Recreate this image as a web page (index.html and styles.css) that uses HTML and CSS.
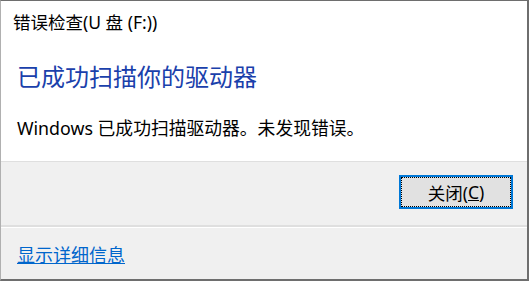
FILE: index.html
```html
<!DOCTYPE html>
<html lang="zh-CN">
<head>
    <meta charset="UTF-8">
    <meta name="viewport" content="width=device-width, initial-scale=1.0">
    <title>错误检查</title>
    <link rel="stylesheet" href="styles.css">
</head>
<body>
    <div class="dialog">
        <div class="main">
            <div class="caption">错误检查(U 盘 (F:))</div>
            <h1 class="instruction">已成功扫描你的驱动器</h1>
            <p class="message">Windows 已成功扫描驱动器。未发现错误。</p>
        </div>
        <div class="buttons">
            <button class="btn"><span class="focus">关闭(<u>C</u>)</span></button>
        </div>
        <div class="details">
            <a href="#" class="link">显示详细信息</a>
        </div>
    </div>
</body>
</html>
```

FILE: styles.css
```css
body {
    margin: 0;
    font-family: "Noto Sans", "Noto Sans CJK SC", sans-serif;
    background-color: #ffffff;
}
.dialog {
    width: 529px;
    height: 281px;
    box-sizing: border-box;
    border: 1px solid #6e6e6e;
    border-left-color: #b0b0b0;
    border-right-width: 2px;
    border-bottom-width: 2px;
    display: flex;
    flex-direction: column;
}
.main {
    height: 160px;
    background-color: #ffffff;
    padding: 0 16px;
}
.caption {
    font-size: 17.5px;
    color: #000000;
    line-height: 22px;
    margin: 10px 0 0 -4px;
}
.instruction {
    margin: 29px 0 0 0;
    font-size: 24px;
    font-weight: normal;
    line-height: 30px;
    color: #1a40ab;
}
.message {
    margin: 24px 0 0 0;
    font-size: 17.8px;
    line-height: 24px;
    color: #000000;
}
.buttons {
    height: 64px;
    border-top: 1px solid #dfdfdf;
    background-color: #f0f0f0;
    display: flex;
    justify-content: flex-end;
    align-items: flex-start;
    padding: 13px 14px 0 0;
    box-sizing: border-box;
}
.btn {
    width: 114px;
    height: 34px;
    padding: 0;
    border: 2px solid #0078d7;
    background-color: #e1e1e1;
    font-family: "Noto Sans", "Noto Sans CJK SC", sans-serif;
    font-size: 17.5px;
    color: #000000;
    box-sizing: border-box;
    outline: none;
}
.focus {
    display: flex;
    align-items: center;
    justify-content: center;
    height: 100%;
    border: 1px dotted #000000;
    box-sizing: border-box;
}
.details {
    flex: 1;
    background-color: #f0f0f0;
    border-top: 2px solid #dfdfdf;
    box-shadow: inset 0 1px 0 #ffffff;
    padding: 17px 0 0 16px;
}
.link {
    font-size: 18px;
    line-height: 22px;
    color: #0066cc;
}
```
